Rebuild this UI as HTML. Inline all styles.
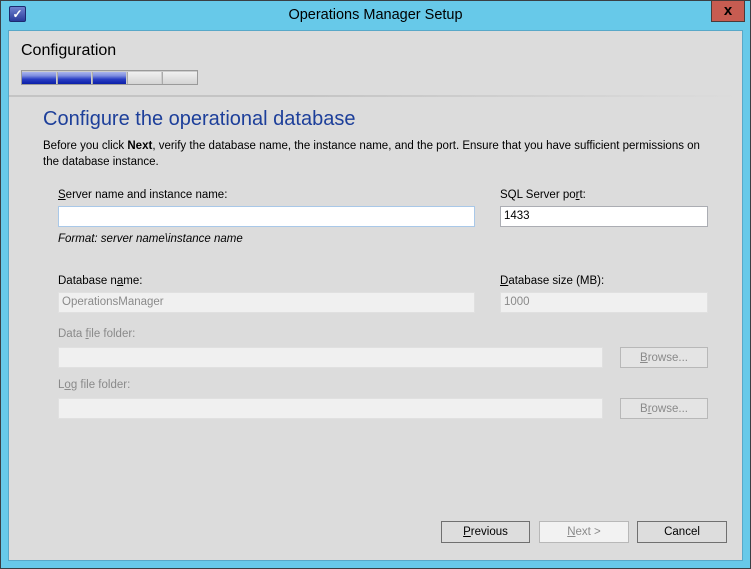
<!DOCTYPE html><html><head><style>
*{margin:0;padding:0;box-sizing:border-box}
body{width:751px;height:569px;background:#67c9e9;position:relative;overflow:hidden;font-family:"Liberation Sans",sans-serif;font-size:11.5px;color:#000}
.a{position:absolute}
#frame{left:0;top:0;width:751px;height:569px;border:1px solid #3a3f44}
#client{left:8px;top:30px;width:735px;height:531px;background:#dcdcdc;border:1px solid #58a8c8}
.tb{background:#fff;border:1px solid #abadb3}
.dis{background:#f0f0f0;border:1px solid #e0e0e0;color:#8a8a8a}
.lbl{font-size:11.5px}
.g{color:#8a8a8a}
.btn{border:1px solid #707070;background:#dddddd;text-align:center;line-height:20px;font-size:11.5px}
u{text-decoration:underline}
.seg{position:absolute;top:1px;height:12px;width:34px}
.on{background:linear-gradient(#aab4ee 0,#7f8fe0 30%,#2a3ec4 60%,#0a1ea8 100%)}
.off{background:linear-gradient(#f0f0f0,#d4d4d4);border-left:1px solid #aaa}
</style></head><body>
<div class="a" id="frame"></div>
<div class="a" style="left:9px;top:6px;width:17px;height:16px;background:linear-gradient(#6f83d0,#2a3c9a);border:1px solid #1c2a70;border-radius:2px;color:#fff;font-size:12px;line-height:14px;text-align:center;font-weight:bold">✓</div>
<div class="a" style="left:0;width:751px;top:7px;text-align:center;font-size:14.5px;color:#000">Operations Manager Setup</div>
<div class="a" style="left:711px;top:0;width:34px;height:22px;background:#c75c51;border:1px solid #4a3a3a;text-align:center;font-weight:bold;font-size:15px;line-height:19px;color:#000">x</div>
<div class="a" id="client"></div>
<div class="a" style="left:21px;top:42px;font-size:16px">Configuration</div>
<div class="a" style="left:21px;top:70px;width:177px;height:15px;border:1px solid #9a9a9a;background:#ccc">
 <div class="seg on" style="left:0"></div><div class="seg on" style="left:35px;border-left:1px solid #aaa"></div><div class="seg on" style="left:70px;border-left:1px solid #aaa"></div><div class="seg off" style="left:105px"></div><div class="seg off" style="left:140px;width:35px"></div>
</div>
<div class="a" style="left:9px;top:95px;width:733px;height:2px;background:linear-gradient(90deg,#c4c4c4 40%,#dcdcdc)"></div>
<div class="a" style="left:43px;top:108px;font-size:20px;color:#1d3f9a">Configure the operational database</div>
<div class="a" style="left:43px;top:138px;width:672px;line-height:16px">Before you click <b>Next</b>, verify the database name, the instance name, and the port. Ensure that you have sufficient permissions on the database instance.</div>
<div class="a lbl" style="left:58px;top:189px"><u>S</u>erver name and instance name:</div>
<div class="a tb" style="left:58px;top:206px;width:417px;height:21px;border-color:#a9c8e8"></div>
<div class="a" style="left:58px;top:233px;font-style:italic">Format: server name\instance name</div>
<div class="a lbl" style="left:500px;top:189px">SQL Server po<u>r</u>t:</div>
<div class="a tb" style="left:500px;top:206px;width:208px;height:21px;padding:3px 3px">1433</div>
<div class="a lbl" style="left:58px;top:275px">Database n<u>a</u>me:</div>
<div class="a dis" style="left:58px;top:292px;width:417px;height:21px;padding:3px 3px">OperationsManager</div>
<div class="a lbl" style="left:500px;top:275px"><u>D</u>atabase size (MB):</div>
<div class="a dis" style="left:500px;top:292px;width:208px;height:21px;padding:3px 3px">1000</div>
<div class="a g" style="left:58px;top:328px">Data <u>f</u>ile folder:</div>
<div class="a dis" style="left:58px;top:347px;width:545px;height:21px"></div>
<div class="a btn g" style="left:620px;top:347px;width:88px;height:21px;border-color:#b8b8b8;background:#e4e4e4"><u>B</u>rowse...</div>
<div class="a g" style="left:58px;top:379px">L<u>o</u>g file folder:</div>
<div class="a dis" style="left:58px;top:398px;width:545px;height:21px"></div>
<div class="a btn g" style="left:620px;top:398px;width:88px;height:21px;border-color:#b8b8b8;background:#e4e4e4">B<u>r</u>owse...</div>
<div class="a btn" style="left:441px;top:521px;width:89px;height:22px"><u>P</u>revious</div>
<div class="a btn g" style="left:539px;top:521px;width:90px;height:22px;border-color:#b8b8b8;background:#f2f2f2"><u>N</u>ext &gt;</div>
<div class="a btn" style="left:637px;top:521px;width:90px;height:22px">Cancel</div>
</body></html>
